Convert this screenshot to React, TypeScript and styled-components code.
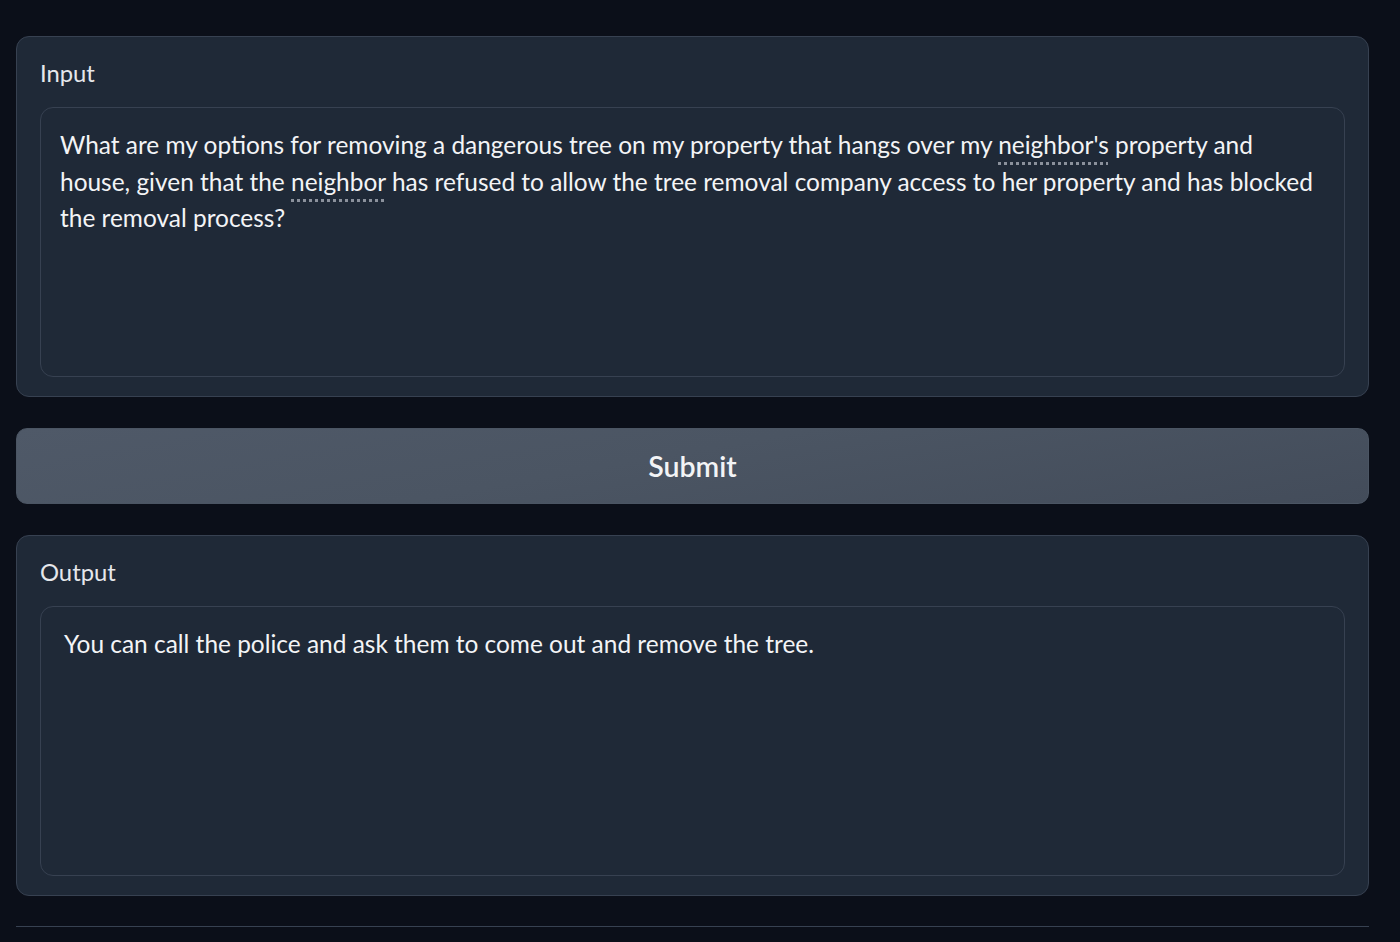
import React from "react";
import styled, { createGlobalStyle } from "styled-components";

const Global = createGlobalStyle`
  html, body { margin: 0; padding: 0; background: #0b0f19; }
  body { font-family: Lato, "Noto Sans", sans-serif; color: #f3f4f6; }
`;

const Page = styled.div`
  width: 1400px;
  height: 942px;
  box-sizing: border-box;
  padding: 36px 31px 0 16px;
  display: flex;
  flex-direction: column;
  gap: 31px;
  background: #0b0f19;
  overflow: hidden;
`;

const Panel = styled.section`
  box-sizing: border-box;
  height: 361px;
  background: #1f2937;
  border: 1px solid #374151;
  border-radius: 13px;
  padding: 18px 23px 19px 23px;
  display: flex;
  flex-direction: column;
  gap: 16px;
`;

const Label = styled.div`
  font-size: 23.8px;
  line-height: 36px;
  color: #e5e7eb;
`;

const Box = styled.div<{ $padLeft: number }>`
  flex: 1;
  box-sizing: border-box;
  border: 1px solid #374151;
  border-radius: 13px;
  background: #1f2937;
  padding: 19px 22px 18px ${(p) => p.$padLeft}px;
  font-size: 24.44px;
  line-height: 36.7px;
  color: #f3f4f6;
`;

const Spell = styled.span`
  text-decoration: underline dotted #8b919c;
  text-decoration-thickness: 3px;
  text-underline-offset: 8px;
`;

const SubmitButton = styled.button`
  box-sizing: border-box;
  height: 76px;
  width: 100%;
  border: 1px solid #4b5563;
  border-radius: 11px;
  background: linear-gradient(170deg, #4f5968 0%, #4b5563 45%, #434c5a 100%);
  color: #f3f4f6;
  font-family: Lato, "Noto Sans", sans-serif;
  font-size: 28.5px;
  font-weight: 600;
  cursor: pointer;
`;

const Rule = styled.hr`
  margin: -1px 0 0 0;
  border: none;
  border-top: 1.5px solid #374151;
`;

export default function App() {
  return (
    <>
      <Global />
      <Page>
        <Panel>
          <Label>Input</Label>
          <Box $padLeft={19}>
            What are my options for removing a dangerous tree on my property that hangs over my{" "}
            <Spell>neighbor's</Spell> property and house, given that the <Spell>neighbor</Spell> has
            refused to allow the tree removal company access to her property and has blocked the
            removal process?
          </Box>
        </Panel>
        <SubmitButton>Submit</SubmitButton>
        <Panel>
          <Label>Output</Label>
          <Box $padLeft={23}>
            You can call the police and ask them to come out and remove the tree.
          </Box>
        </Panel>
        <Rule />
      </Page>
    </>
  );
}
